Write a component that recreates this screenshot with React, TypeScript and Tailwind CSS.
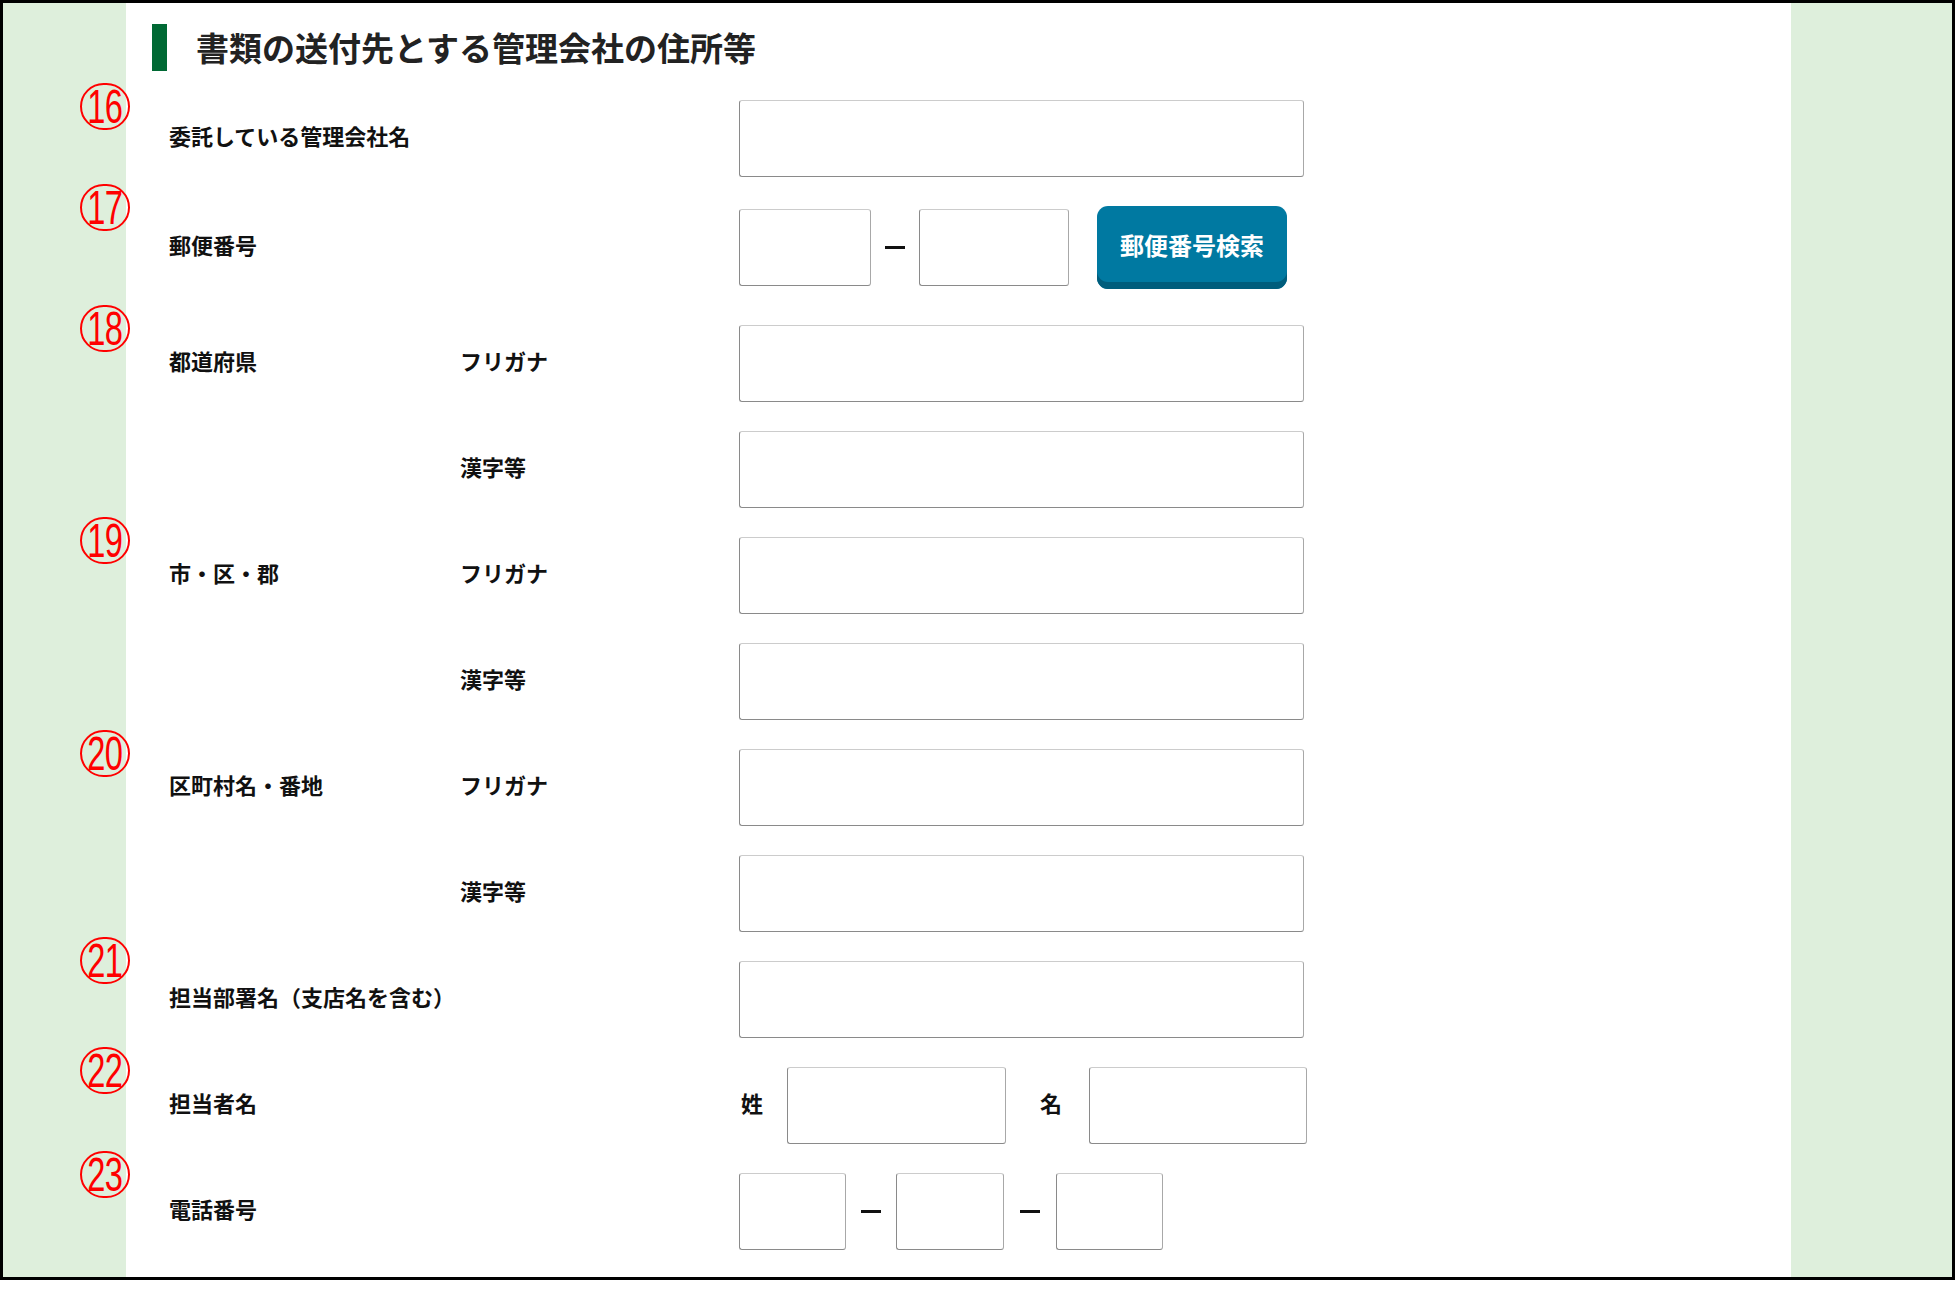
import type { ReactNode } from "react";

const box =
  "h-[77px] rounded-[3px] border border-[#a8a8a8] border-t-[#cccccc] border-b-[#8a8a8a] border-l-[#8a8a8a] bg-white outline-none";

function Num({ n, top }: { n: string; top: string }) {
  return (
    <span
      className={`absolute left-[-46px] ${top} flex h-[47px] w-[50px] items-center justify-center rounded-full border-[2.5px] border-[#ff0000] bg-transparent text-[#ff0000]`}
    >
      <span className="inline-block scale-x-[0.68] text-[48px] font-normal leading-none tracking-[-1px] [font-family:'Liberation_Sans',sans-serif]">
        {n}
      </span>
    </span>
  );
}

function Dash() {
  return <span className="h-[3px] w-[20px] bg-[#111]" />;
}

function Row({
  num,
  top = "top-[-20px]",
  label,
  sub,
  children,
  className = "",
}: {
  num?: string;
  top?: string;
  label?: string;
  sub?: string;
  children: ReactNode;
  className?: string;
}) {
  return (
    <div className={`relative grid h-[77px] grid-cols-[291px_279px_1fr] items-center pl-[43px] ${className}`}>
      {num && <Num n={num} top={top} />}
      <span className="-mt-[6px] text-[22px] font-bold text-[#111]">{label}</span>
      <span className="-mt-[6px] text-[22px] font-bold text-[#111]">{sub}</span>
      <div className="flex h-full items-center">{children}</div>
    </div>
  );
}

export default function App() {
  return (
    <div className="h-[1291px] w-[1957px] bg-white [font-family:'Noto_Sans_CJK_JP','Noto_Sans',sans-serif]">
      <div className="flex h-[1280px] w-[1955px] border-[3px] border-black">
        <div className="w-[123px] shrink-0 bg-[#deefdc]" />
        <div className="flex w-[1665px] shrink-0 flex-col gap-[29px] bg-white pt-[21px]">
          <div className="flex h-[47px] items-center pl-[26px]">
            <span className="h-[47px] w-[15px] bg-[#006934]" />
            <h1 className="ml-[29px] text-[33px] font-bold leading-none text-[#222]">
              書類の送付先とする管理会社の住所等
            </h1>
          </div>

          <Row num="16" top="top-[-17px]" label="委託している管理会社名">
            <input className={`${box} w-[565px]`} />
          </Row>

          <Row num="17" top="top-[-22px]" label="郵便番号" className="mb-[13px]">
            <div className="flex items-center">
              <input className={`${box} w-[132px]`} />
              <span className="mx-[14px] flex">
                <Dash />
              </span>
              <input className={`${box} w-[150px]`} />
              <button className="ml-[28px] h-[83px] w-[190px] self-start rounded-[11px] bg-[#0079a1] pb-[6px] text-[24px] font-bold text-white shadow-[inset_0_-7px_0_#005d7c]">
                郵便番号検索
              </button>
            </div>
          </Row>

          <Row num="18" label="都道府県" sub="フリガナ">
            <input className={`${box} w-[565px]`} />
          </Row>
          <Row sub="漢字等">
            <input className={`${box} w-[565px]`} />
          </Row>

          <Row num="19" label="市・区・郡" sub="フリガナ">
            <input className={`${box} w-[565px]`} />
          </Row>
          <Row sub="漢字等">
            <input className={`${box} w-[565px]`} />
          </Row>

          <Row num="20" top="top-[-19px]" label="区町村名・番地" sub="フリガナ">
            <input className={`${box} w-[565px]`} />
          </Row>
          <Row sub="漢字等">
            <input className={`${box} w-[565px]`} />
          </Row>

          <Row num="21" top="top-[-24px]" label="担当部署名（支店名を含む）">
            <input className={`${box} w-[565px]`} />
          </Row>

          <Row num="22" label="担当者名">
            <div className="flex items-center">
              <span className="-mt-[6px] ml-[2px] w-[22px] text-[22px] font-bold text-[#111]">姓</span>
              <input className={`${box} ml-[24px] w-[219px]`} />
              <span className="-mt-[6px] ml-[34px] w-[22px] text-[22px] font-bold text-[#111]">名</span>
              <input className={`${box} ml-[27px] w-[218px]`} />
            </div>
          </Row>

          <Row num="23" top="top-[-22px]" label="電話番号">
            <div className="flex items-center">
              <input className={`${box} w-[107px]`} />
              <span className="mx-[15px] flex">
                <Dash />
              </span>
              <input className={`${box} w-[108px]`} />
              <span className="mx-[16px] flex">
                <Dash />
              </span>
              <input className={`${box} w-[107px]`} />
            </div>
          </Row>
        </div>
        <div className="flex-1 bg-[#deefdc]" />
      </div>
    </div>
  );
}
